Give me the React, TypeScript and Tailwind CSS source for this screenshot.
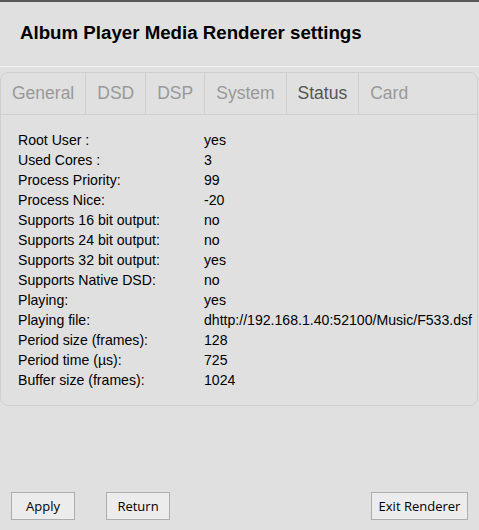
const tabs = ["General", "DSD", "DSP", "System", "Status", "Card"];

const rows: [string, string][] = [
    ["Root User :", "yes"],
    ["Used Cores :", "3"],
    ["Process Priority:", "99"],
    ["Process Nice:", "-20"],
    ["Supports 16 bit output:", "no"],
    ["Supports 24 bit output:", "no"],
    ["Supports 32 bit output:", "yes"],
    ["Supports Native DSD:", "no"],
    ["Playing:", "yes"],
    ["Playing file:", "dhttp://192.168.1.40:52100/Music/F533.dsf"],
    ["Period size (frames):", "128"],
    ["Period time (µs):", "725"],
    ["Buffer size (frames):", "1024"],
];

const Btn = ({ label, w }: { label: string; w: string }) => (
    <button className={`${w} h-[28px] pt-[2px] bg-[#ececec] border border-[#adadad] text-[13px] text-black [font-family:'Open_Sans',sans-serif]`}>
        {label}
    </button>
);

export default function App() {
    return (
        <div className="w-[479px] h-[530px] bg-[#e0e0e0] [font-family:'Liberation_Sans',Arial,sans-serif] overflow-hidden flex flex-col">
            <div className="h-[66px] border-t-2 border-[#5a5a5a] flex items-center px-[20px] pb-[2px]">
                <h1 className="text-[18.7px] font-bold text-black">Album Player Media Renderer settings</h1>
            </div>
            <div className="h-[1px] bg-[#f4f4f4]" />
            <div className="mt-[5px] mr-[1px] border border-[#cfcfcf] rounded-[8px]">
                <div className="flex h-[42px] border-b border-[#cfcfcf]">
                    {tabs.map((t, i) => (
                        <div
                            key={t}
                            className={`flex items-center text-[17.5px] px-[11px] ${i < tabs.length - 1 ? "border-r border-[#cfcfcf]" : ""} ${t === "Status" ? "text-[#555]" : "text-[#999]"}`}
                        >
                            {t}
                        </div>
                    ))}
                </div>
                <div className="pt-[16px] pb-[14px] pl-[17px]">
                    {rows.map(([k, v]) => (
                        <div key={k} className="flex h-[20px] items-center text-[14.1px] text-black whitespace-nowrap">
                            <span className="w-[186px]">{k}</span>
                            <span>{v}</span>
                        </div>
                    ))}
                </div>
            </div>
            <div className="mt-auto mb-[10px] flex items-center px-[11px]">
                <Btn label="Apply" w="w-[64px]" />
                <div className="w-[31px]" />
                <Btn label="Return" w="w-[64px]" />
                <div className="flex-1" />
                <Btn label="Exit Renderer" w="w-[97px]" />
            </div>
        </div>
    );
}
